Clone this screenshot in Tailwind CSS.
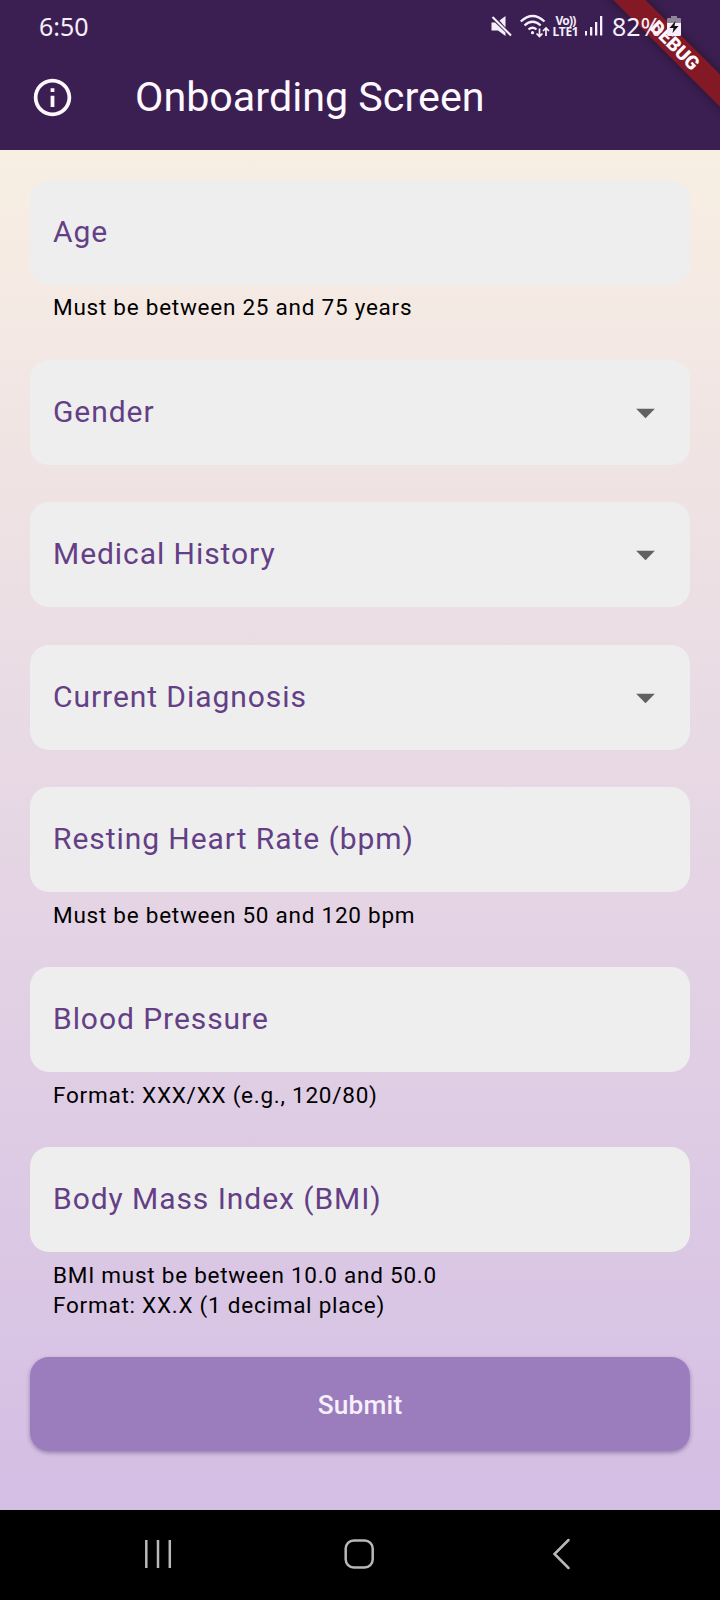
<!DOCTYPE html>
<html lang="en">
<head>
<meta charset="utf-8">
<title>Onboarding Screen</title>
<script src="https://cdn.jsdelivr.net/npm/@tailwindcss/browser@4"></script>
</head>
<body class="w-[720px] h-[1600px] overflow-hidden flex flex-col font-['Roboto',sans-serif] bg-black">
<header class="relative h-[150px] shrink-0 overflow-hidden bg-[#3c1f52] text-[#fdf9ff]">
  <!-- Debug ribbon -->
  <div class="absolute left-[575px] top-[34px] w-[200px] h-[22.5px] rotate-45 bg-[#841926] shadow-[0_0_10px_rgba(0,0,0,0.45)] flex items-center justify-center text-[19px] leading-none font-black">DEBUG</div>
  <!-- Status bar -->
  <div class="relative h-[52px] flex items-center px-[39px] text-[#f6eefa] font-['Noto_Sans',sans-serif]">
    <span class="text-[25px] leading-none">6:50</span>
    <div class="ml-auto flex items-center">
      <svg class="w-[21px] h-[22px]" viewBox="0 0 21 22" fill="currentColor"><path d="M8.500 5.500L14.500 1v11.500zM.500 7.500h3.500L14.500 17.500V21L7 15.500H.500z"/><path d="M1.500 2L20 20.500" stroke="currentColor" stroke-width="2.200"/></svg>
      <svg class="ml-[8px] w-[30px] h-[24px]" viewBox="0 0 30 24" fill="none" stroke="currentColor" stroke-width="2.300"><path d="M.800 7.500Q12.500-3.500 24.500 7.500M4.500 11.500q8-7.500 16.200 0M8.500 15.500q4-3.600 8 0"/><circle cx="12.500" cy="18.700" r="1.600" fill="currentColor" stroke="none"/><path d="M19.500 14.500v8m-3-3L19.500 22.500l3-3M26 22v-8m-3 3L26 14l3 3" stroke-width="1.700"/></svg>
      <div class="ml-[3px] w-[25px] flex flex-col items-center text-[12px] leading-[11px] tracking-[-0.3px] font-bold"><span class="tracking-[-0.8px]">Vo))</span><span>LTE1</span></div>
      <svg class="ml-[7px] w-[18px] h-[20px]" viewBox="0 0 18 20" fill="currentColor"><path d="M0 15h2v4.500H0zM5 11h2.300v8.500H5zM10 6h2.300v13.500H10zM15 0h2.300v19.500H15z"/></svg>
      <span class="ml-[9px] w-[50px] text-[25px] leading-none">82%</span>
      <svg class="ml-[5px] w-[14px] h-[22px]" viewBox="0 0 14 22"><path d="M4 1h6v2h3q1 0 1 1v5H0V4q0-1 1-1h3z" fill="#8f8597"/><path d="M0 8h14v11.500q0 1.500-1.500 1.500h-11Q0 21 0 19.500z" fill="#f6eefa"/><path d="M8.500 6L2.500 13h4L5.500 18 11.500 11h-4z" fill="#111"/></svg>
    </div>
  </div>
  <!-- App bar -->
  <div class="relative h-[91px] flex items-center pl-[30px]">
    <svg class="w-[45px] h-[45px]" viewBox="0 0 24 24" fill="currentColor"><path d="M11 7h2v2h-2zm0 4h2v6h-2zm1-9C6.480 2 2 6.480 2 12s4.480 10 10 10 10-4.480 10-10S17.520 2 12 2zm0 18c-4.410 0-8-3.590-8-8s3.590-8 8-8 8 3.590 8 8-3.590 8-8 8z"/></svg>
    <h1 class="ml-[60px] text-[41.25px] leading-none">Onboarding Screen</h1>
  </div>
</header>

<main class="h-[1360px] shrink-0 px-[30px] pt-[30px] bg-linear-to-b from-[#f8efe3] to-[#d4bee4] text-[30px] tracking-[0.94px] text-[#643f86]">
  <section class="h-[179.9px]">
    <div class="h-[105px] rounded-[19px] bg-[#eeeeee] px-[23px] pb-[3px] flex items-center">Age</div>
    <p class="pl-[23px] pt-[7px] text-[22.5px] leading-[30px] tracking-[0.75px] text-black">Must be between 25 and 75 years</p>
  </section>
  <section class="h-[142.5px]">
    <div class="h-[105px] rounded-[19px] bg-[#eeeeee] pl-[23px] pr-[22.5px] flex items-center justify-between"><span class="pb-[2px]">Gender</span><svg class="w-[45px] h-[45px]" viewBox="0 0 24 24" fill="#616161"><path d="M7 10l5 5 5-5z"/></svg></div>
  </section>
  <section class="h-[142.5px]">
    <div class="h-[105px] rounded-[19px] bg-[#eeeeee] pl-[23px] pr-[22.5px] flex items-center justify-between"><span class="pb-[3px]">Medical History</span><svg class="w-[45px] h-[45px]" viewBox="0 0 24 24" fill="#616161"><path d="M7 10l5 5 5-5z"/></svg></div>
  </section>
  <section class="h-[142.5px]">
    <div class="h-[105px] rounded-[19px] bg-[#eeeeee] pl-[23px] pr-[22.5px] flex items-center justify-between"><span class="pb-[2px]">Current Diagnosis</span><svg class="w-[45px] h-[45px]" viewBox="0 0 24 24" fill="#616161"><path d="M7 10l5 5 5-5z"/></svg></div>
  </section>
  <section class="h-[180px]">
    <div class="h-[105px] rounded-[19px] bg-[#eeeeee] px-[23px] pb-[3px] flex items-center">Resting Heart Rate (bpm)</div>
    <p class="pl-[23px] pt-[7.5px] text-[22.5px] leading-[30px] tracking-[0.75px] text-black">Must be between 50 and 120 bpm</p>
  </section>
  <section class="h-[180px]">
    <div class="h-[105px] rounded-[19px] bg-[#eeeeee] px-[23px] pb-[3px] flex items-center">Blood Pressure</div>
    <p class="pl-[23px] pt-[7.5px] text-[22.5px] leading-[30px] tracking-[0.75px] text-black">Format: XXX/XX (e.g., 120/80)</p>
  </section>
  <section class="h-[210px]">
    <div class="h-[105px] rounded-[19px] bg-[#eeeeee] px-[23px] pb-[3px] flex items-center">Body Mass Index (BMI)</div>
    <p class="pl-[23px] pt-[7.5px] text-[22.5px] leading-[30px] tracking-[0.75px] text-black">BMI must be between 10.0 and 50.0<br>Format: XX.X (1 decimal place)</p>
  </section>
  <button class="block w-full h-[93.75px] pt-[3px] rounded-[19px] bg-[#9b7dbd] text-[#f7effb] text-[26.25px] font-medium tracking-[0.19px] shadow-[0_2px_4px_rgba(60,31,82,0.4)]">Submit</button>
</main>

<nav class="h-[90px] shrink-0 bg-black flex">
  <svg class="w-[720px] h-[90px]" viewBox="0 0 720 90" fill="none" stroke="#b8b8b8" stroke-width="2.500"><path d="M146.300 30v28M158 30v28M169.800 30v28"/><rect x="345.700" y="30.500" width="27" height="27" rx="8"/><path d="M568.500 30l-14 14 14 14" stroke-linecap="round"/></svg>
</nav>
</body>
</html>
